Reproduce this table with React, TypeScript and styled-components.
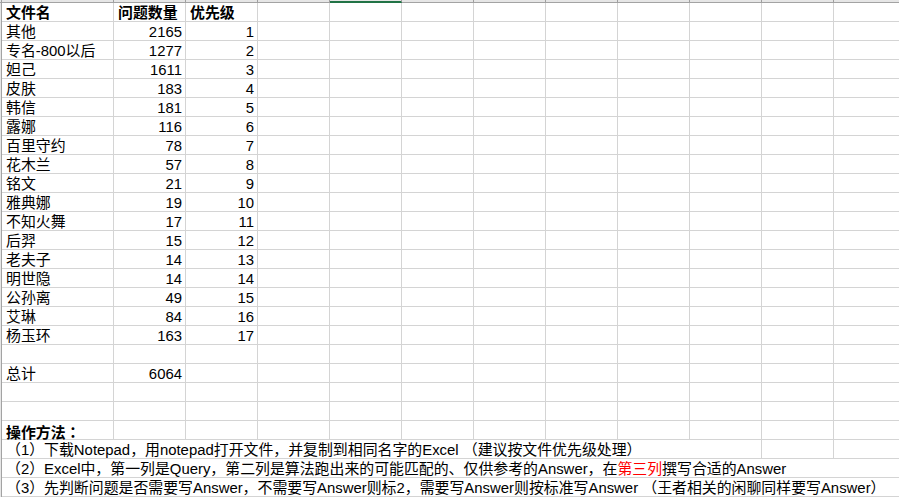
import React from "react";
import styled, { createGlobalStyle } from "styled-components";

const GlobalStyle = createGlobalStyle`
  html, body {
    margin: 0;
    padding: 0;
    background: #ffffff;
    overflow: hidden;
  }
  body {
    font-family: "Liberation Sans", "Noto Sans CJK SC", sans-serif;
    font-size: 14.9px;
    color: #000000;
  }
`;

const COLS = "112px repeat(12, 72px)";
const TOTAL_COLS = 13;

const Sheet = styled.div`
  width: 899px;
  height: 503px;
  overflow: hidden;
  display: flex;
  flex-direction: column;
`;

const HeaderStrip = styled.div`
  display: grid;
  grid-template-columns: 2px ${COLS};
  height: 3px;
  background: #e6e6e6;
`;

const HeaderStub = styled.div<{ $selected?: boolean }>`
  box-sizing: border-box;
  height: 3px;
  border-right: 1px solid #9f9f9f;
  border-bottom: ${(p) => (p.$selected ? "2px solid #217346" : "1px solid #a3a3a3")};
`;

const Body = styled.div`
  display: flex;
`;

const RowHeaderEdge = styled.div`
  width: 2px;
  flex: none;
  box-sizing: border-box;
  background: #e6e6e6;
  border-right: 1px solid #a3a3a3;
`;

const Grid = styled.div`
  display: flex;
  flex-direction: column;
`;

const Row = styled.div`
  display: grid;
  grid-template-columns: ${COLS};
  height: 19px;
`;

const Cell = styled.div<{ $align?: "left" | "right"; $bold?: boolean; $span?: number }>`
  box-sizing: border-box;
  height: 19px;
  border-right: 1px solid #d4d4d4;
  border-bottom: 1px solid #d4d4d4;
  padding: 1px ${(p) => (p.$align === "right" ? "3px" : "0")} 0
    ${(p) => (p.$align === "right" ? "0" : "4px")};
  text-align: ${(p) => p.$align ?? "left"};
  font-weight: ${(p) => (p.$bold ? 700 : 400)};
  line-height: 19px;
  white-space: nowrap;
  overflow: visible;
  grid-column: span ${(p) => p.$span ?? 1};
`;

const Red = styled.span`
  color: #ff0000;
`;

const CenteredPunct = styled.span`
  font-family: "Noto Sans CJK TC", sans-serif;
`;

const data: [string, number, number][] = [
  ["其他", 2165, 1],
  ["专名-800以后", 1277, 2],
  ["妲己", 1611, 3],
  ["皮肤", 183, 4],
  ["韩信", 181, 5],
  ["露娜", 116, 6],
  ["百里守约", 78, 7],
  ["花木兰", 57, 8],
  ["铭文", 21, 9],
  ["雅典娜", 19, 10],
  ["不知火舞", 17, 11],
  ["后羿", 15, 12],
  ["老夫子", 14, 13],
  ["明世隐", 14, 14],
  ["公孙离", 49, 15],
  ["艾琳", 84, 16],
  ["杨玉环", 163, 17],
];

const Blanks: React.FC<{ count: number }> = ({ count }) => (
  <>
    {Array.from({ length: count }).map((_, i) => (
      <Cell key={i} />
    ))}
  </>
);

const SpanRow: React.FC<{ span: number; children: React.ReactNode }> = ({ span, children }) => (
  <Row>
    <Cell $span={span}>{children}</Cell>
    <Blanks count={TOTAL_COLS - span} />
  </Row>
);

export default function App() {
  return (
    <>
      <GlobalStyle />
      <Sheet>
        <HeaderStrip>
          <HeaderStub />
          {Array.from({ length: TOTAL_COLS }).map((_, i) => (
            <HeaderStub key={i} $selected={i === 4} />
          ))}
        </HeaderStrip>
        <Body>
          <RowHeaderEdge />
          <Grid>
            <Row>
              <Cell $bold>文件名</Cell>
              <Cell $bold>问题数量</Cell>
              <Cell $bold>优先级</Cell>
              <Blanks count={TOTAL_COLS - 3} />
            </Row>
            {data.map(([name, count, prio]) => (
              <Row key={name}>
                <Cell>{name}</Cell>
                <Cell $align="right">{count}</Cell>
                <Cell $align="right">{prio}</Cell>
                <Blanks count={TOTAL_COLS - 3} />
              </Row>
            ))}
            <Row>
              <Blanks count={TOTAL_COLS} />
            </Row>
            <Row>
              <Cell>总计</Cell>
              <Cell $align="right">6064</Cell>
              <Blanks count={TOTAL_COLS - 2} />
            </Row>
            <Row>
              <Blanks count={TOTAL_COLS} />
            </Row>
            <Row>
              <Blanks count={TOTAL_COLS} />
            </Row>
            <Row>
              <Cell $bold>
                操作方法<CenteredPunct>：</CenteredPunct>
              </Cell>
              <Blanks count={TOTAL_COLS - 1} />
            </Row>
            <SpanRow span={10}>
              （1）下载Notepad，用notepad打开文件，并复制到相同名字的Excel  （建议按文件优先级处理）
            </SpanRow>
            <SpanRow span={12}>
              （2）Excel中，第一列是Query，第二列是算法跑出来的可能匹配的、仅供参考的Answer，在<Red>第三列</Red>撰写合适的Answer
            </SpanRow>
            <SpanRow span={13}>
              （3）先判断问题是否需要写Answer，不需要写Answer则标2，需要写Answer则按标准写Answer  （王者相关的闲聊同样要写Answer）
            </SpanRow>
          </Grid>
        </Body>
      </Sheet>
    </>
  );
}
